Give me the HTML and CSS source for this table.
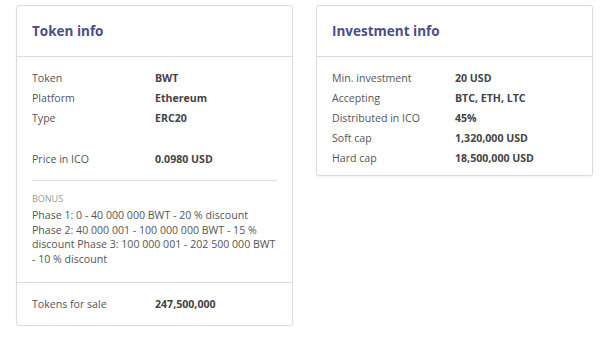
FILE: index.html
```html
<!DOCTYPE html>
<html>
<head>
<meta charset="utf-8">
<link rel="stylesheet" href="styles.css">
</head>
<body>
<div class="wrap">
  <section class="card">
    <div class="card-head"><h2>Token info</h2></div>
    <div class="card-body">
      <div class="row"><span class="lbl">Token</span><span class="val">BWT</span></div>
      <div class="row"><span class="lbl">Platform</span><span class="val">Ethereum</span></div>
      <div class="row"><span class="lbl">Type</span><span class="val">ERC20</span></div>
      <div class="row spaced"><span class="lbl">Price in ICO</span><span class="val">0.0980 USD</span></div>
      <div class="bonus">
        <div class="bonus-title">BONUS</div>
        <div class="bonus-text">Phase 1: 0 - 40 000 000 BWT - 20 % discount Phase 2: 40 000 001 - 100 000 000 BWT - 15 % discount Phase 3: 100 000 001 - 202 500 000 BWT - 10 % discount</div>
      </div>
    </div>
    <div class="card-foot">
      <div class="row"><span class="lbl">Tokens for sale</span><span class="val">247,500,000</span></div>
    </div>
  </section>
  <section class="card">
    <div class="card-head"><h2>Investment info</h2></div>
    <div class="card-body short">
      <div class="row"><span class="lbl">Min. investment</span><span class="val">20 USD</span></div>
      <div class="row"><span class="lbl">Accepting</span><span class="val">BTC, ETH, LTC</span></div>
      <div class="row"><span class="lbl">Distributed in ICO</span><span class="val">45%</span></div>
      <div class="row"><span class="lbl">Soft cap</span><span class="val">1,320,000 USD</span></div>
      <div class="row"><span class="lbl">Hard cap</span><span class="val">18,500,000 USD</span></div>
    </div>
  </section>
</div>
</body>
</html>
```
FILE: styles.css
```css
* { box-sizing: border-box; }
html, body { margin: 0; padding: 0; background: #fff; }
body { font-family: "Open Sans", "DejaVu Sans", sans-serif; color: #555; }
.wrap {
  display: flex;
  align-items: flex-start;
  gap: 23px;
  padding: 5px 0 0 16px;
}
.card {
  width: 277px;
  border: 1px solid #dcdcdc;
  border-radius: 3px;
  background: #fff;
  box-shadow: 0 1px 2px rgba(0,0,0,0.05);
}
.card-head {
  height: 51px;
  border-bottom: 1px solid #dcdcdc;
  padding: 0 15px;
  display: flex;
  align-items: center;
}
.card-head h2 {
  margin: 0;
  font-size: 13.5px;
  font-weight: 700;
  color: #4a4d8a;
}
.card-body { padding: 11px 15px 0; }
.card-body.short { padding-bottom: 7px; }
.row {
  display: flex;
  font-size: 10.6px;
  line-height: 20px;
  height: 20px;
}
.row.spaced { margin-top: 21px; }
.lbl { width: 123px; color: #555; }
.val { font-weight: 700; color: #444; }
.bonus {
  margin-top: 11px;
  border-top: 1px solid #dcdcdc;
  padding: 12px 0 16px;
}
.bonus-title {
  font-size: 9px;
  line-height: 12px;
  color: #999;
  margin-bottom: 3px;
}
.bonus-text {
  font-size: 10.6px;
  line-height: 14.6px;
  color: #555;
}
.card-foot {
  border-top: 1px solid #dcdcdc;
  padding: 11px 15px 11px;
}
```
